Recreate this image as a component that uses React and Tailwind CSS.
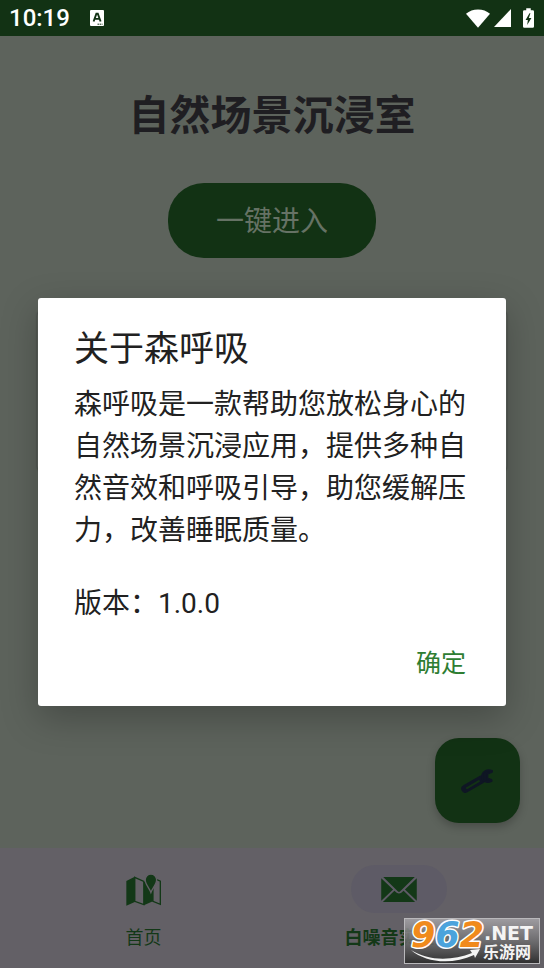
import React from "react";

function StatusBar() {
  return (
    <header className="flex h-9 items-center justify-between bg-[#123214] pr-[10px] pl-[9px] text-white">
      <div className="flex items-center gap-5">
        <span className="text-[24px] leading-9 font-medium">10:19</span>
        <svg viewBox="0 0 14 16" className="h-4 w-[14px]" aria-hidden="true">
          <rect width="14" height="16" rx="1" fill="#fff" />
          <path d="M3.6 11.5 6.4 3.6h1.4l2.8 7.9M4.8 8.9h4.6" fill="none" stroke="#123214" strokeWidth="1.9" />
          <path d="M7.5 14.2h5" stroke="#123214" strokeWidth="1" strokeDasharray="1.5 .6" />
        </svg>
      </div>
      <div className="flex items-center">
        <svg viewBox="0 0 72 56" className="h-[19px] w-6" aria-hidden="true">
          <path d="M36 56 0 14C10 5 22 1 36 1s26 4 36 13z" fill="#fff" />
        </svg>
        <svg viewBox="0 0 17 18" className="ml-1 h-[18px] w-[17px]" aria-hidden="true">
          <path d="M17 0v18H0z" fill="#fff" />
        </svg>
        <svg viewBox="0 0 34 60" className="ml-3 h-5 w-[11px]" aria-hidden="true">
          <path d="M10 0h14v6h6q4 0 4 4v46q0 4-4 4H4q-4 0-4-4V10q0-4 4-4h6z" fill="#fff" />
          <path d="M20 15 8 36h7l-2 16 13-22h-8l5-15z" fill="#123214" />
        </svg>
      </div>
    </header>
  );
}

function WrenchIcon() {
  return (
    <svg viewBox="0 0 100 76" className="h-[25px] w-[33px]" aria-hidden="true">
      <g fill="none" strokeLinejoin="round">
        <path d="M13 63 62 35" stroke="#0f1624" strokeWidth="25" strokeLinecap="round" />
        <path d="M18 61 54 40" stroke="#123214" strokeWidth="6" strokeLinecap="round" />
        <path d="M94 9C78 3 64 13 64 26S78 48 93 39L92 36 80 32V18L94 12z" fill="#0f1624" stroke="#0f1624" strokeWidth="6" />
      </g>
    </svg>
  );
}

function MapIcon() {
  return (
    <svg viewBox="0 0 104 98" className="h-[33px] w-[35px]" aria-hidden="true">
      <path d="M1 24 26 11V86L1 97zM53 25 80 36V84L53 96z" fill="#133817" />
      <path d="M26 13 53 25V94L26 84zM80 36V84L102 93V24L88 18" fill="none" stroke="#133817" strokeWidth="4" />
      <path
        d="M74 58C69 44 57 34 57 20a17 17 0 0 1 34 0C91 34 79 44 74 58z"
        fill="#133817"
        stroke="#636066"
        strokeWidth="4"
      />
    </svg>
  );
}

function MailIcon() {
  return (
    <svg viewBox="0 0 108 76" className="h-[25px] w-9" aria-hidden="true">
      <path d="M6 0H102L57 44Q54 47 51 44zM0 4 36 38 0 72zM108 4V72L72 38zM40 42 47 48Q54 53 61 48L68 42 103 76H5z" fill="#133817" />
    </svg>
  );
}

function Watermark() {
  return (
    <div className="absolute right-1 bottom-1 w-[136px]">
      <svg viewBox="0 0 136 46" className="block h-[46px] w-full overflow-visible" role="img" aria-label="962.NET 乐游网">
        <defs>
          <linearGradient id="plate" x1="0" y1="0" x2="0" y2="1">
            <stop offset="0" stopColor="#a9a7ab" stopOpacity="0.85" />
            <stop offset="0.5" stopColor="#6f6e70" stopOpacity="0.85" />
            <stop offset="1" stopColor="#2c2c2c" stopOpacity="0.95" />
          </linearGradient>
        </defs>
        <rect x="0.5" y="0.5" width="135" height="45" fill="url(#plate)" stroke="#b9b8bb" />
        <text
          x="7"
          y="29"
          fontFamily="'DejaVu Sans', sans-serif"
          fontWeight="700"
          fontStyle="italic"
          fontSize="35"
          stroke="#fff"
          strokeWidth="3"
          strokeLinejoin="round"
          paintOrder="stroke"
        >
          <tspan fill="#f08a1c">9</tspan>
          <tspan fill="#4ba3dc">6</tspan>
          <tspan fill="#f08a1c">2</tspan>
        </text>
        <text x="80" y="22" fontFamily="'DejaVu Sans', sans-serif" fontWeight="700" fontSize="19" fill="#f4f4f4">
          .NET
        </text>
        <path d="M7 32C24 43 48 43 68 35L66 32 76 31 71 40 70 37C48 47 22 45 7 32z" fill="#f4f4f4" />
        <text x="79" y="40" fontFamily="'Noto Sans CJK SC', sans-serif" fontWeight="700" fontSize="16" fill="#f4f4f4">
          乐游网
        </text>
      </svg>
    </div>
  );
}

function NavItem({ label, active, children }) {
  return (
    <button type="button" className="flex flex-1 flex-col items-center text-[#133817]">
      <span className={active ? "flex h-12 w-24 items-center justify-center rounded-full bg-[#5e5b66]" : "flex h-12 w-24 items-center justify-center"}>
        {children}
      </span>
      <span className={active ? "mt-[9px] text-[18px] leading-8 font-bold" : "mt-[9px] text-[18px] leading-8"}>{label}</span>
    </button>
  );
}

function AboutDialog() {
  return (
    <div className="absolute inset-x-0 top-9 bottom-0 flex items-center px-[38px]">
      <section
        role="dialog"
        aria-modal="true"
        aria-labelledby="about-title"
        className="w-full rounded-[3px] bg-white px-9 pt-7 pb-[14px] text-[#212121] shadow-[0_12px_36px_rgba(0,0,0,0.25)]"
      >
        <h2 id="about-title" className="text-[35px] leading-12">关于森呼吸</h2>
        <p className="mt-[10px] text-[28px] leading-[42px]">
          森呼吸是一款帮助您放松身心的自然场景沉浸应用，提供多种自然音效和呼吸引导，助您缓解压力，改善睡眠质量。
        </p>
        <p className="mt-[31px] text-[28px] leading-[42px]">版本：1.0.0</p>
        <div className="mt-[11px] flex justify-end">
          <button type="button" className="h-14 px-1 text-[25px] text-[#2e7d32]">确定</button>
        </div>
      </section>
    </div>
  );
}

export default function App() {
  return (
    <div className="relative flex min-h-screen flex-col bg-[#5d635c] font-[Roboto,'Noto_Sans_CJK_SC',sans-serif]" lang="zh-CN">
      <StatusBar />
      <main className="flex flex-1 flex-col items-center">
        <h1 className="mt-[50px] text-[41px] leading-[60px] font-bold text-[#1f1e22]">自然场景沉浸室</h1>
        <button type="button" className="mt-[37px] h-[75px] rounded-[36px] bg-[#123214] px-12 pt-[2px] text-[28px] text-[#667265]">
          一键进入
        </button>
        <div className="mt-[52px] w-full px-[37px]">
          <div className="h-[162px] rounded-md bg-[#5b605a] shadow-[0_0_2px_rgba(0,0,0,0.4)]" />
        </div>
        <div className="mt-auto flex w-full justify-end px-6 pb-[25px]">
          <button
            type="button"
            aria-label="工具"
            className="flex size-[85px] items-center justify-center rounded-3xl bg-[#123214] shadow-[0_4px_8px_rgba(0,0,0,0.22)]"
          >
            <WrenchIcon />
          </button>
        </div>
      </main>
      <nav className="flex h-[120px] items-start bg-[#636066] pt-[17px] pr-[18px] pl-4">
        <NavItem label="首页">
          <MapIcon />
        </NavItem>
        <NavItem label="白噪音实验室" active>
          <MailIcon />
        </NavItem>
      </nav>
      <AboutDialog />
      <Watermark />
    </div>
  );
}
